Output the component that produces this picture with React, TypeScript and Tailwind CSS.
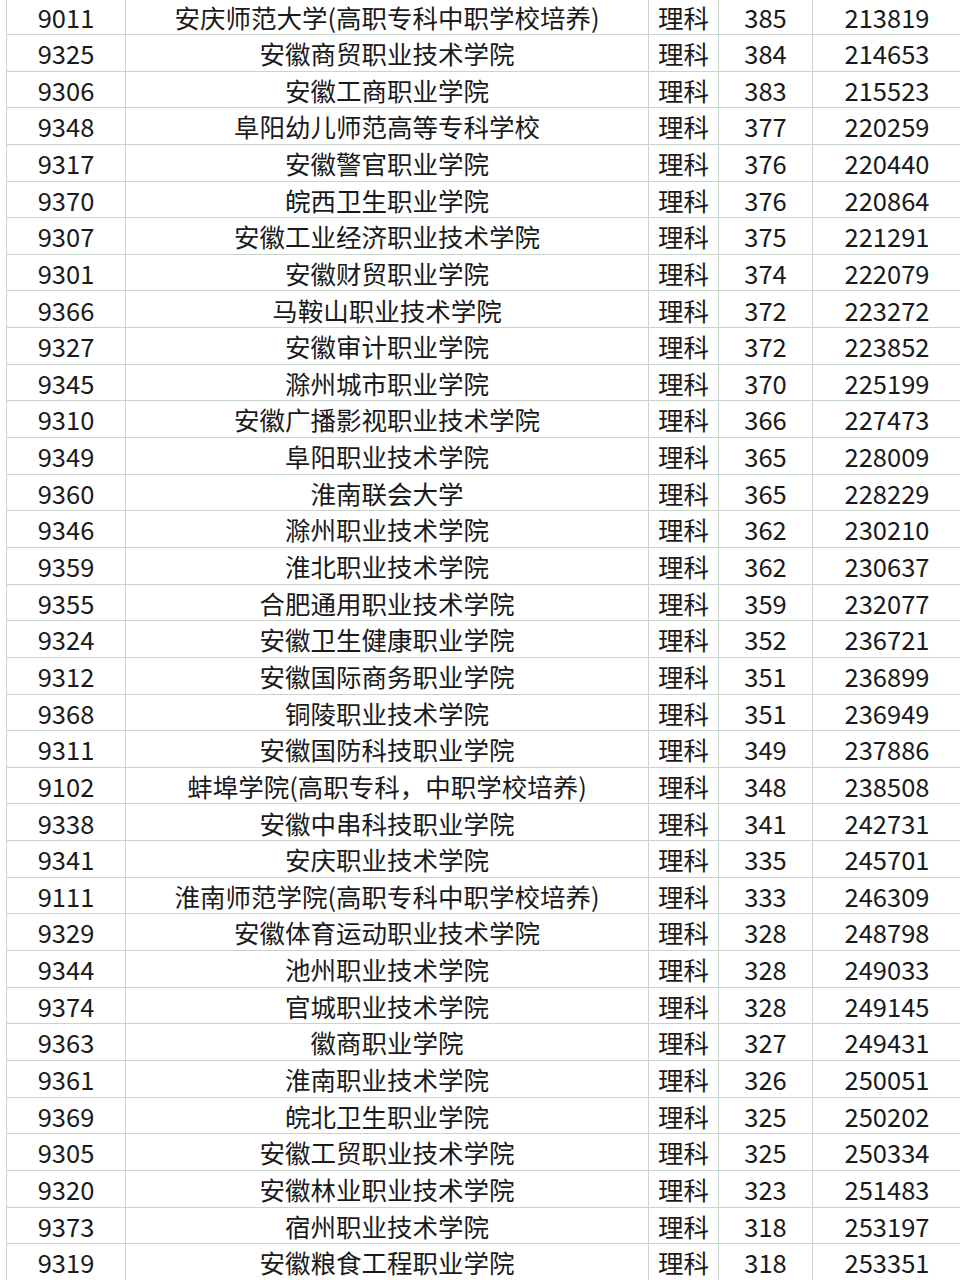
const rows: [string, string, string, string][] = [
  ["9011", "安庆师范大学(高职专科中职学校培养)", "385", "213819"],
  ["9325", "安徽商贸职业技术学院", "384", "214653"],
  ["9306", "安徽工商职业学院", "383", "215523"],
  ["9348", "阜阳幼儿师范高等专科学校", "377", "220259"],
  ["9317", "安徽警官职业学院", "376", "220440"],
  ["9370", "皖西卫生职业学院", "376", "220864"],
  ["9307", "安徽工业经济职业技术学院", "375", "221291"],
  ["9301", "安徽财贸职业学院", "374", "222079"],
  ["9366", "马鞍山职业技术学院", "372", "223272"],
  ["9327", "安徽审计职业学院", "372", "223852"],
  ["9345", "滁州城市职业学院", "370", "225199"],
  ["9310", "安徽广播影视职业技术学院", "366", "227473"],
  ["9349", "阜阳职业技术学院", "365", "228009"],
  ["9360", "淮南联会大学", "365", "228229"],
  ["9346", "滁州职业技术学院", "362", "230210"],
  ["9359", "淮北职业技术学院", "362", "230637"],
  ["9355", "合肥通用职业技术学院", "359", "232077"],
  ["9324", "安徽卫生健康职业学院", "352", "236721"],
  ["9312", "安徽国际商务职业学院", "351", "236899"],
  ["9368", "铜陵职业技术学院", "351", "236949"],
  ["9311", "安徽国防科技职业学院", "349", "237886"],
  ["9102", "蚌埠学院(高职专科，中职学校培养)", "348", "238508"],
  ["9338", "安徽中串科技职业学院", "341", "242731"],
  ["9341", "安庆职业技术学院", "335", "245701"],
  ["9111", "淮南师范学院(高职专科中职学校培养)", "333", "246309"],
  ["9329", "安徽体育运动职业技术学院", "328", "248798"],
  ["9344", "池州职业技术学院", "328", "249033"],
  ["9374", "官城职业技术学院", "328", "249145"],
  ["9363", "徽商职业学院", "327", "249431"],
  ["9361", "淮南职业技术学院", "326", "250051"],
  ["9369", "皖北卫生职业学院", "325", "250202"],
  ["9305", "安徽工贸职业技术学院", "325", "250334"],
  ["9320", "安徽林业职业技术学院", "323", "251483"],
  ["9373", "宿州职业技术学院", "318", "253197"],
  ["9319", "安徽粮食工程职业学院", "318", "253351"],
];

const cell = "flex items-center justify-center border-r border-[#c9d5cc]";

export default function App() {
  return (
    <div className="h-[1280px] overflow-hidden bg-white pl-[6px]">
      <div
        className="w-[960px] border-l border-[#c9d5cc] text-[25.5px] leading-none text-[#1a1a1a]"
        style={{ fontFamily: '"Noto Sans CJK SC", "Noto Sans", sans-serif' }}
      >
        {rows.map(([code, name, score, rank], i) => (
          <div
            key={code}
            className={`flex border-b border-[#c9d5cc] ${i === 0 ? "h-[35px]" : "h-[36.65px]"}`}
          >
            <div className={`${cell} w-[119px]`}>{code}</div>
            <div className={`${cell} w-[523px]`}>{name}</div>
            <div className={`${cell} w-[70px]`}>理科</div>
            <div className={`${cell} w-[94px]`}>{score}</div>
            <div className="flex w-[148px] items-center justify-center">{rank}</div>
          </div>
        ))}
      </div>
    </div>
  );
}
